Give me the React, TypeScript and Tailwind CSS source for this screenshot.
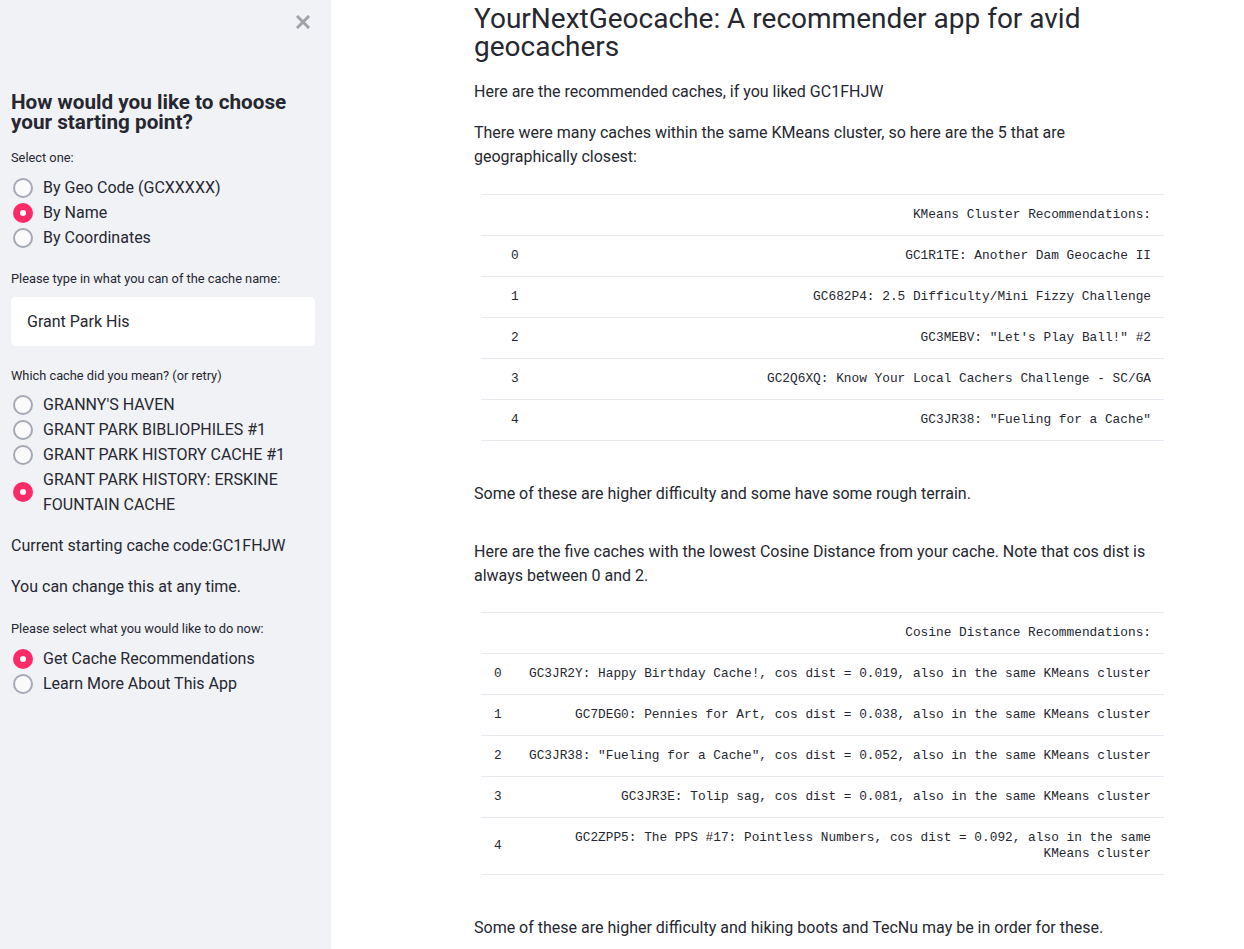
import React from 'react';

const FONT = { fontFamily: 'Roboto, "Noto Sans", "Liberation Sans", sans-serif' };
const MONO = { fontFamily: '"Liberation Mono", "DejaVu Sans Mono", monospace' };

function Radio({ label, checked }: { label: React.ReactNode; checked?: boolean }) {
  return (
    <div className="flex items-center">
      <div className="ml-[2px] flex w-[20px] shrink-0 items-center justify-center">
        {checked ? (
          <span className="flex h-[20px] w-[20px] items-center justify-center rounded-full bg-[#fd2a68]">
            <span className="h-[6px] w-[6px] rounded-full bg-white" />
          </span>
        ) : (
          <span className="h-[20px] w-[20px] rounded-full border-2 border-[#a6a9b3] bg-[#fafafa]" />
        )}
      </div>
      <span className="ml-[10px] text-[16px] leading-[25px] text-[#262730]">{label}</span>
    </div>
  );
}

function RadioGroup({ items, selected }: { items: string[]; selected: number }) {
  return (
    <div className="flex flex-col">
      {items.map((it, i) => (
        <Radio key={it} label={it} checked={i === selected} />
      ))}
    </div>
  );
}

function Sidebar() {
  return (
    <aside className="relative w-[331px] shrink-0 bg-[#f0f2f6] pl-[11px] pr-[16px] min-h-[949px]" style={FONT}>
      {/* collapse button */}
      <button className="absolute left-[296px] top-[15px] h-[14px] w-[14px]">
        <svg viewBox="0 0 14 14" className="h-[14px] w-[14px]">
          <path d="M2 2 L12 12 M12 2 L2 12" stroke="#a0a2a9" strokeWidth="3" strokeLinecap="square" />
        </svg>
      </button>
      <h2 className="pt-[92px] text-[20.7px] font-bold leading-[20px] text-[#262730]">
        How would you like to choose your starting point?
      </h2>
      <p className="mt-[18px] text-[12.8px] leading-[16px] text-[#262730]">Select one:</p>
      <div className="mt-[9px]">
        <RadioGroup items={['By Geo Code (GCXXXXX)', 'By Name', 'By Coordinates']} selected={1} />
      </div>
      <p className="mt-[21px] text-[12.8px] leading-[16px] text-[#262730]">Please type in what you can of the cache name:</p>
      <div className="mt-[10px] flex h-[49px] items-center rounded-[5px] bg-white pl-[16px] text-[16px] text-[#262730]">
        Grant Park His
      </div>
      <p className="mt-[22px] text-[12.8px] leading-[16px] text-[#262730]">Which cache did you mean? (or retry)</p>
      <div className="mt-[8px]">
        <RadioGroup
          items={[
            "GRANNY'S HAVEN",
            'GRANT PARK BIBLIOPHILES #1',
            'GRANT PARK HISTORY CACHE #1',
            'GRANT PARK HISTORY: ERSKINE FOUNTAIN CACHE',
          ]}
          selected={3}
        />
      </div>
      <p className="mt-[17px] text-[16px] leading-[24px] text-[#262730]">Current starting cache code:GC1FHJW</p>
      <p className="mt-[17px] text-[16px] leading-[24px] text-[#262730]">You can change this at any time.</p>
      <p className="mt-[22px] text-[12.8px] leading-[16px] text-[#262730]">Please select what you would like to do now:</p>
      <div className="mt-[9px]">
        <RadioGroup items={['Get Cache Recommendations', 'Learn More About This App']} selected={0} />
      </div>
    </aside>
  );
}

function RecTable({ header, rows, indexPad }: { header: string; rows: string[]; indexPad: string }) {
  return (
    <table className="ml-[7px] w-[683px] border-collapse text-[12.8px] leading-[16px] text-[#262730]" style={MONO}>
      <thead>
        <tr className="border-y border-[#e6e9ef]">
          <th className="py-[12px]" />
          <th className="px-[13px] py-[12px] text-right font-normal">{header}</th>
        </tr>
      </thead>
      <tbody>
        {rows.map((r, i) => (
          <tr key={i} className="border-b border-[#e6e9ef]">
            <td className={`${indexPad} py-[12px] pr-[13px] text-left`}>{i}</td>
            <td className="px-[13px] py-[12px] text-right">{r}</td>
          </tr>
        ))}
      </tbody>
    </table>
  );
}

export default function App() {
  return (
    <div className="flex min-h-[949px] bg-white">
      <Sidebar />
      <main className="flex-1 pl-[143px] pt-[5px]" style={FONT}>
        <div className="w-[690px] text-[#262730]">
          <h1 className="text-[28px] font-normal leading-[28px]">
            YourNextGeocache: A recommender app for avid geocachers
          </h1>
          <p className="mt-[19px] text-[16px] leading-[24px]">Here are the recommended caches, if you liked GC1FHJW</p>
          <p className="mt-[17px] text-[16px] leading-[24px]">
            There were many caches within the same KMeans cluster, so here are the 5 that are geographically closest:
          </p>
          <div className="mt-[25px]">
            <RecTable
              header="KMeans Cluster Recommendations:"
              indexPad="pl-[30px]"
              rows={[
                'GC1R1TE: Another Dam Geocache II',
                'GC682P4: 2.5 Difficulty/Mini Fizzy Challenge',
                'GC3MEBV: "Let\'s Play Ball!" #2',
                'GC2Q6XQ: Know Your Local Cachers Challenge - SC/GA',
                'GC3JR38: "Fueling for a Cache"',
              ]}
            />
          </div>
          <p className="mt-[41px] text-[16px] leading-[24px]">
            Some of these are higher difficulty and some have some rough terrain.
          </p>
          <p className="mt-[34px] text-[16px] leading-[24px]">
            Here are the five caches with the lowest Cosine Distance from your cache. Note that cos dist is always
            between 0 and 2.
          </p>
          <div className="mt-[24px]">
            <RecTable
              header="Cosine Distance Recommendations:"
              indexPad="pl-[13px]"
              rows={[
                'GC3JR2Y: Happy Birthday Cache!, cos dist = 0.019, also in the same KMeans cluster',
                'GC7DEG0: Pennies for Art, cos dist = 0.038, also in the same KMeans cluster',
                'GC3JR38: "Fueling for a Cache", cos dist = 0.052, also in the same KMeans cluster',
                'GC3JR3E: Tolip sag, cos dist = 0.081, also in the same KMeans cluster',
                'GC2ZPP5: The PPS #17: Pointless Numbers, cos dist = 0.092, also in the same KMeans cluster',
              ]}
            />
          </div>
          <p className="mt-[41px] text-[16px] leading-[24px]">
            Some of these are higher difficulty and hiking boots and TecNu may be in order for these.
          </p>
        </div>
      </main>
    </div>
  );
}
